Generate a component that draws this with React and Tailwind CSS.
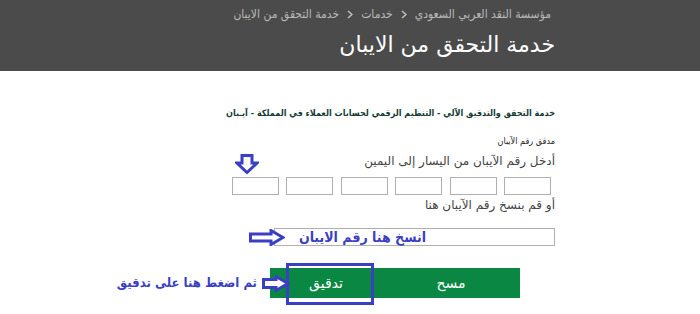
import React from "react";

const font = { fontFamily: '"DejaVu Sans", sans-serif' };
const cond = { fontFamily: '"DejaVu Sans Condensed", "DejaVu Sans", sans-serif' };

function DownArrow() {
  return (
    <svg width="24" height="20" viewBox="0 0 24 20" className="absolute left-[235px] top-[154px]">
      <path d="M7 1.5 H17 V9 H22 L12 18.5 L2 9 H7 Z" fill="#fff" stroke="#3a3fc4" strokeWidth="3" strokeLinejoin="miter" />
    </svg>
  );
}

function RightArrow({ className }) {
  return (
    <svg width="36" height="17" viewBox="0 0 36 17" className={className}>
      <path d="M1.5 5 H22 V1.5 L34 8.5 L22 15.5 V12 H1.5 Z" fill="#fff" stroke="#3a3fc4" strokeWidth="3" strokeLinejoin="miter" />
    </svg>
  );
}

function Chevron() {
  return (
    <svg width="6" height="9" viewBox="0 0 6 9" className="shrink-0">
      <path d="M1 1 L5 4.5 L1 8" fill="none" stroke="#c4c4c4" strokeWidth="1.4" />
    </svg>
  );
}

export default function App() {
  return (
    <div className="relative w-[700px] h-[314px] bg-white overflow-hidden" style={font}>
      <div dir="rtl" className="h-[71px] bg-[#4b4b4b] pr-[145px] pt-[5px]">
        <div className="text-[12px] text-[#b9b9b9] leading-[18px] pr-[4px] flex items-center gap-[8px]" style={cond}>
          <span>مؤسسة النقد العربي السعودي</span>
          <Chevron />
          <span>خدمات</span>
          <Chevron />
          <span>خدمة التحقق من الايبان</span>
        </div>
        <div className="text-[22px] text-white leading-[30px] mt-[7px]">خدمة التحقق من الايبان</div>
      </div>

      <div dir="rtl" className="pr-[145px] pt-[34px]">
        <div className="text-[9px] font-bold text-[#133b36] leading-[16px]" style={cond}>
          خدمة التحقق والتدقيق الآلي - التنظيم الرقمي لحسابات العملاء في المملكة - آيـبان
        </div>
        <div className="text-[9px] text-[#222] leading-[12px] mt-[14px]" style={cond}>مدقق رقم الآيبان</div>
        <div className="text-[12px] text-[#444] leading-[18px] mt-[5px]">أدخل رقم الآيبان من اليسار إلى اليمين</div>
        <div className="flex gap-[7.4px] mt-[7px] pr-[4px]">
          {[0, 1, 2, 3, 4, 5].map((i) => (
            <div key={i} className="w-[47px] h-[18px] border border-[#b0b0b0] bg-white" />
          ))}
        </div>
        <div className="text-[12px] text-[#444] leading-[18px] mt-[1px]">أو قم بنسخ رقم الآيبان هنا</div>
        <div className="w-[281px] h-[18px] border border-[#b0b0b0] mt-[14px] bg-white" />
        <div className="flex mt-[22px] mr-[35px] w-[250px] h-[30px] bg-[#0a8742] text-white text-[14px]">
          <div className="flex-1 flex items-center justify-center pl-[8px]">مسح</div>
          <div className="w-[104px] flex items-center justify-center pl-[8px]">تدقيق</div>
        </div>
      </div>

      <DownArrow />
      <RightArrow className="absolute left-[249px] top-[229px]" />
      <div dir="rtl" className="absolute right-[274px] top-[227px] text-[14px] font-bold text-[#3a3fc4] leading-[20px]" style={cond}>
        انسخ هنا رقم الايبان
      </div>
      <div className="absolute left-[286px] top-[263px] w-[88px] h-[42px] border-[3px] border-[#3a3fc4]" />
      <div className="absolute left-[262px] top-[275px] w-[28px] h-[17px]">
        <svg width="28" height="17" viewBox="0 0 28 17">
          <path d="M1.5 4.5 H14 V1.5 L26 8.5 L14 15.5 V12.5 H1.5 Z" fill="#fff" stroke="#3a3fc4" strokeWidth="3" />
        </svg>
      </div>
      <div dir="rtl" className="absolute right-[443px] top-[273px] text-[13px] font-bold text-[#3a3fc4] leading-[20px]" style={cond}>
        ثم اضغط هنا على تدقيق
      </div>
    </div>
  );
}
